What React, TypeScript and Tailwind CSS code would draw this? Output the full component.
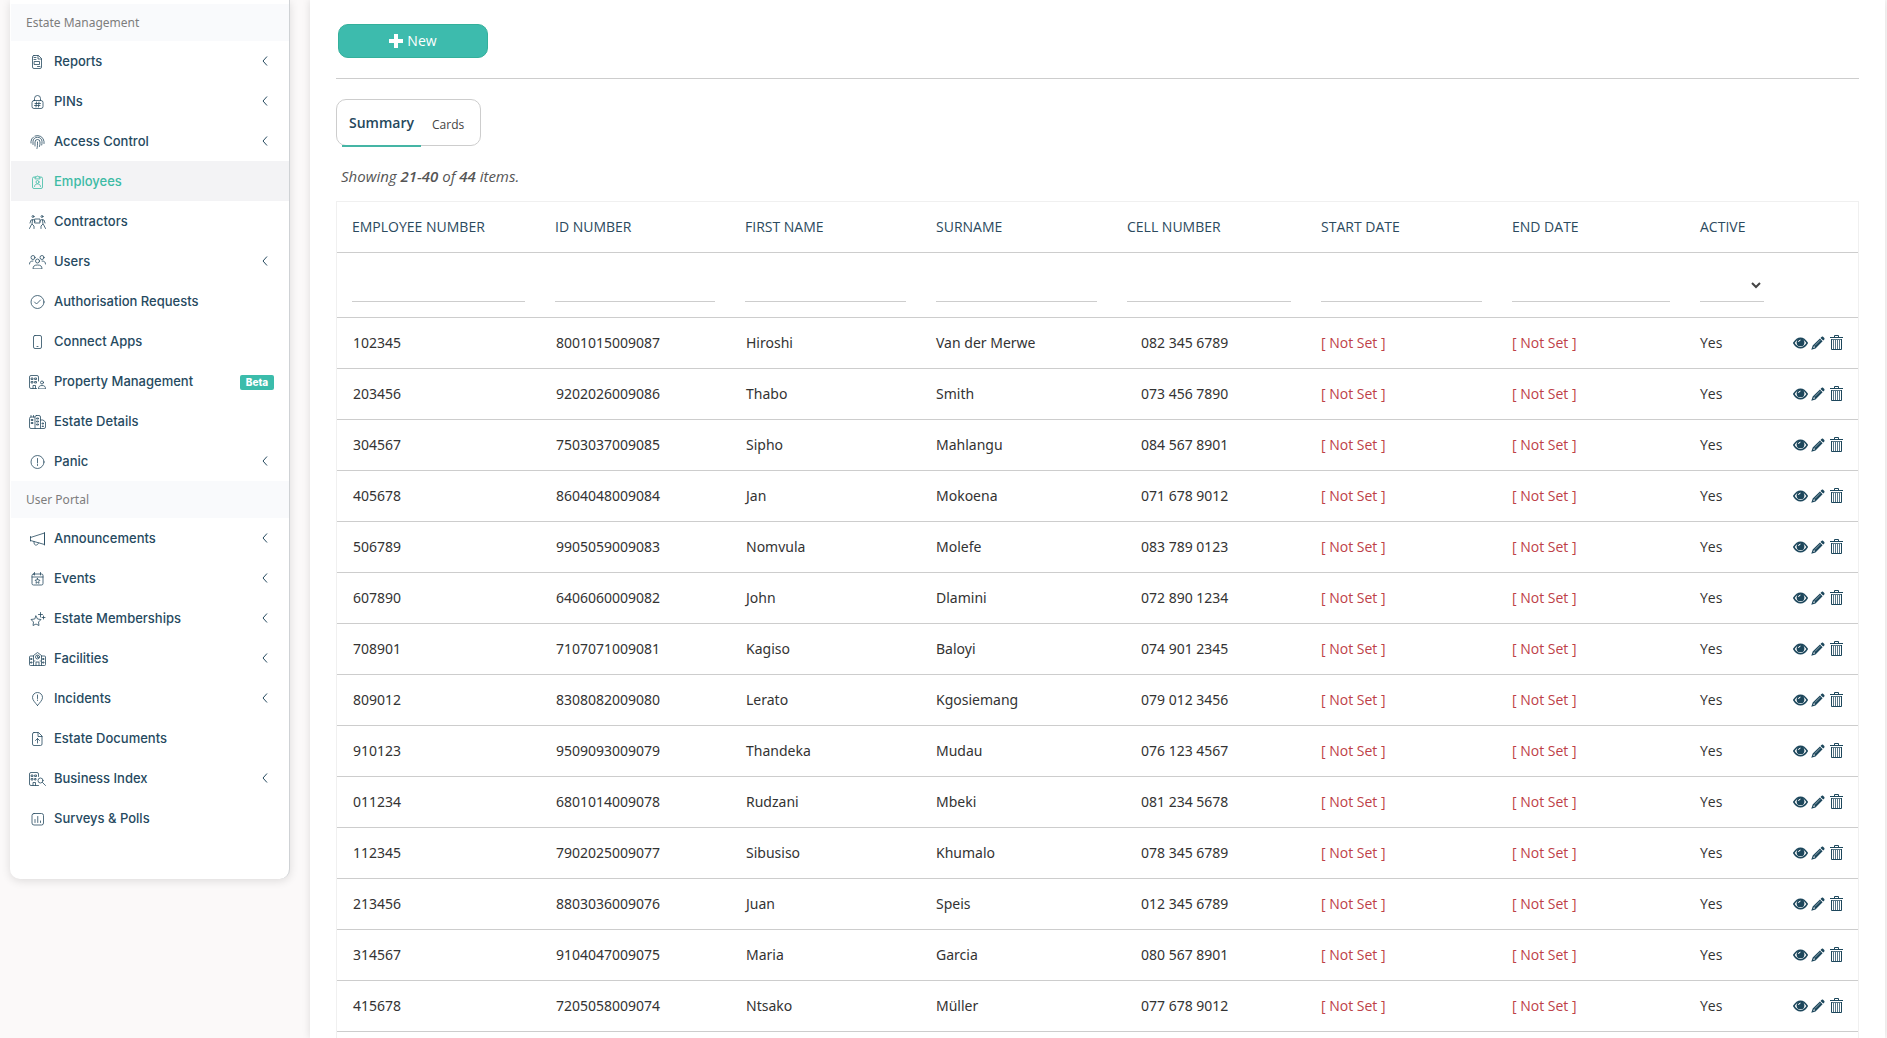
import type { ReactNode } from "react";

type IconName =
  | "reports"
  | "pins"
  | "access"
  | "employees"
  | "contractors"
  | "users"
  | "authorisation"
  | "apps"
  | "property"
  | "estate"
  | "panic"
  | "announcements"
  | "events"
  | "memberships"
  | "facilities"
  | "incidents"
  | "documents"
  | "business"
  | "surveys";

interface NavItem {
  label: string;
  icon: IconName;
  expandable?: boolean;
  active?: boolean;
  badge?: string;
}

const estateItems: NavItem[] = [
  { label: "Reports", icon: "reports", expandable: true },
  { label: "PINs", icon: "pins", expandable: true },
  { label: "Access Control", icon: "access", expandable: true },
  { label: "Employees", icon: "employees", active: true },
  { label: "Contractors", icon: "contractors" },
  { label: "Users", icon: "users", expandable: true },
  { label: "Authorisation Requests", icon: "authorisation" },
  { label: "Connect Apps", icon: "apps" },
  { label: "Property Management", icon: "property", badge: "Beta" },
  { label: "Estate Details", icon: "estate" },
  { label: "Panic", icon: "panic", expandable: true },
];

const portalItems: NavItem[] = [
  { label: "Announcements", icon: "announcements", expandable: true },
  { label: "Events", icon: "events", expandable: true },
  { label: "Estate Memberships", icon: "memberships", expandable: true },
  { label: "Facilities", icon: "facilities", expandable: true },
  { label: "Incidents", icon: "incidents", expandable: true },
  { label: "Estate Documents", icon: "documents" },
  { label: "Business Index", icon: "business", expandable: true },
  { label: "Surveys & Polls", icon: "surveys" },
];

const columns = [
  { label: "Employee Number", width: "w-[203px]" },
  { label: "ID Number", width: "w-[190px]" },
  { label: "First Name", width: "w-[191px]" },
  { label: "Surname", width: "w-[191px]" },
  { label: "Cell Number", width: "w-[194px]" },
  { label: "Start Date", width: "w-[191px]" },
  { label: "End Date", width: "w-[188px]" },
];

const employees = [
  { number: "102345", id: "8001015009087", first: "Hiroshi", surname: "Van der Merwe", cell: "082 345 6789" },
  { number: "203456", id: "9202026009086", first: "Thabo", surname: "Smith", cell: "073 456 7890" },
  { number: "304567", id: "7503037009085", first: "Sipho", surname: "Mahlangu", cell: "084 567 8901" },
  { number: "405678", id: "8604048009084", first: "Jan", surname: "Mokoena", cell: "071 678 9012" },
  { number: "506789", id: "9905059009083", first: "Nomvula", surname: "Molefe", cell: "083 789 0123" },
  { number: "607890", id: "6406060009082", first: "John", surname: "Dlamini", cell: "072 890 1234" },
  { number: "708901", id: "7107071009081", first: "Kagiso", surname: "Baloyi", cell: "074 901 2345" },
  { number: "809012", id: "8308082009080", first: "Lerato", surname: "Kgosiemang", cell: "079 012 3456" },
  { number: "910123", id: "9509093009079", first: "Thandeka", surname: "Mudau", cell: "076 123 4567" },
  { number: "011234", id: "6801014009078", first: "Rudzani", surname: "Mbeki", cell: "081 234 5678" },
  { number: "112345", id: "7902025009077", first: "Sibusiso", surname: "Khumalo", cell: "078 345 6789" },
  { number: "213456", id: "8803036009076", first: "Juan", surname: "Speis", cell: "012 345 6789" },
  { number: "314567", id: "9104047009075", first: "Maria", surname: "Garcia", cell: "080 567 8901" },
  { number: "415678", id: "7205058009074", first: "Ntsako", surname: "Müller", cell: "077 678 9012" },
];

// All drawn on a 34x28 grid and shown at half size
const iconPaths: Record<IconName, ReactNode> = {
  reports: (
    <>
      <path d="M10 1h9l6 6v17a3 3 0 0 1-3 3H10a3 3 0 0 1-3-3V4a3 3 0 0 1 3-3z" />
      <path d="M18 1v7h7M10 5h4M10 9h4M11 13h10v6H11zM17 23h5" />
    </>
  ),
  pins: (
    <>
      <rect x="6" y="11" width="22" height="16" rx="4" />
      <path d="M11 11V7a6 6 0 0 1 12 0v4M15 14l-1 10M20 14l-1 10M12 17h11M11 21h11" />
    </>
  ),
  access: (
    <>
      <path d="M4 16v-3a13 12 0 0 1 5-9M12 2a13 13 0 0 1 18 11v4M8 19v-6a9 8.500 0 0 1 18 0c0 3 0 5-.5 7M12 22v-8a5 5 0 0 1 10 0c0 4 0 6-1 9M17 14c0 6 0 9-1 13" />
    </>
  ),
  employees: (
    <>
      <path d="M13 4h-3a3 3 0 0 0-3 3v17a3 3 0 0 0 3 3h14a3 3 0 0 0 3-3V7a3 3 0 0 0-3-3h-3" />
      <path d="M12 7V4h3a2 2 0 0 1 4 0h3v3z" />
      <circle cx="17" cy="14" r="3" />
      <path d="M11 23c0-3 2-5 6-5s6 2 6 5" />
    </>
  ),
  contractors: (
    <>
      <circle cx="8" cy="3" r="2" />
      <circle cx="26" cy="3" r="2" />
      <rect x="12" y="8" width="10" height="8" />
      <path d="M12 13l-3-4-5 1-2 6M7 10l-1 8 4 4v5M5 19l-4 8M22 13l3-4 5 1 2 6M27 10l1 8-4 4v5M29 19l4 8" />
    </>
  ),
  users: (
    <>
      <circle cx="8" cy="5" r="4" />
      <circle cx="26" cy="5" r="4" />
      <circle cx="17" cy="12" r="4" />
      <path d="M1 18c0-4 2-6 7-6M33 18c0-4-2-6-7-6M8 27c0-5 3-7 9-7s9 2 9 7z" />
    </>
  ),
  authorisation: (
    <>
      <circle cx="17" cy="14" r="13" />
      <path d="M11 14l4 4 8-8" />
    </>
  ),
  apps: (
    <>
      <rect x="9" y="1" width="16" height="26" rx="3" />
      <path d="M16 23h2" />
    </>
  ),
  property: (
    <>
      <path d="M15 27H4a3 3 0 0 1-3-3V4a3 3 0 0 1 3-3h12a3 3 0 0 1 3 3v8M8 27v-6h5v6" />
      <path d="M5 6h3v3H5zM12 6h3v3h-3zM5 13h3v3H5zM12 13h3v3h-3z" />
      <circle cx="26" cy="15" r="3" />
      <path d="M19 27c0-4 2-6 7-6s7 2 7 6z" />
    </>
  ),
  estate: (
    <>
      <path d="M12 27H4a3 3 0 0 1-3-3V7a3 3 0 0 1 3-3h7M4 4V1M9 4V1M15 1h5a3 3 0 0 1 3 3v23H12V4a3 3 0 0 1 3-3zM23 10h5l5 4v10a3 3 0 0 1-3 3h-7" />
      <path d="M5 9h3v2H5zM5 15h3v2H5zM16 6h3v2h-3zM16 12h3v2h-3zM16 18h3v2h-3zM27 16h2v2h-2zM27 22h2v1h-2z" />
    </>
  ),
  panic: (
    <>
      <circle cx="17" cy="14" r="13" />
      <path d="M17 7v9M17 19v2" />
    </>
  ),
  announcements: (
    <>
      <path d="M3 9v9M3 11L31 2v23L3 17M31 1v25M10 19c-1 5 2 8 5 7s3-2 4-4" />
    </>
  ),
  events: (
    <>
      <rect x="6" y="4" width="22" height="22" rx="3" />
      <path d="M6 10h22M11 1v5M23 1v5M17 13l1.500 3 3.500.5-2.500 2.500.5 3.500-3-1.700-3 1.700.5-3.500-2.500-2.500 3.500-.5z" />
    </>
  ),
  memberships: (
    <>
      <path d="M14 8l3 6 7 1-5 5 1 7-6-3-6 3 1-7-5-5 7-1zM23 1v9M19 5h8M29 8v6M26 11h6" />
    </>
  ),
  facilities: (
    <>
      <path d="M9 8H3a2 2 0 0 0-2 2v15a2 2 0 0 0 2 2h28a2 2 0 0 0 2-2V10a2 2 0 0 0-2-2h-6M9 27V7l8-6 8 6v20M14 27v-7h6v7" />
      <circle cx="17" cy="10" r="4" />
      <path d="M4 13h2v2H4zM4 20h2v2H4zM28 13h2v2h-2zM28 20h2v2h-2zM17 8v3h2M11 18h1M22 18h1" />
    </>
  ),
  incidents: (
    <>
      <path d="M17 27c-5-6-10-11-10-16a10 10 0 0 1 20 0c0 5-5 10-10 16zM17 6v7M17 16v1" />
    </>
  ),
  documents: (
    <>
      <path d="M10 1h9l7 7v16a3 3 0 0 1-3 3H10a3 3 0 0 1-3-3V4a3 3 0 0 1 3-3z" />
      <path d="M18 1v8h8M17 22v-9M13 17l4-4 4 4" />
    </>
  ),
  business: (
    <>
      <path d="M19 27H4a3 3 0 0 1-3-3V4a3 3 0 0 1 3-3h12a3 3 0 0 1 3 3v5M8 27v-6h5v6" />
      <path d="M5 6h3v3H5zM12 6h3v3h-3zM5 13h3v3H5zM12 13h2v3h-2z" />
      <circle cx="23" cy="17" r="5" />
      <path d="M27 21l6 6" />
    </>
  ),
  surveys: (
    <>
      <rect x="6" y="3" width="23" height="23" rx="4" />
      <path d="M12 21v-6M17.500 21V9M23 21v-3" />
    </>
  ),
};

function MenuIcon({ name }: { name: IconName }) {
  return (
    <svg
      viewBox="0 0 34 28"
      className="h-[14px] w-[17px] shrink-0"
      fill="none"
      stroke="currentColor"
      strokeWidth="1.6"
      strokeLinecap="round"
      strokeLinejoin="round"
      aria-hidden="true"
    >
      {iconPaths[name]}
    </svg>
  );
}

function MenuHeading({ children }: { children: ReactNode }) {
  return (
    <h2 className="flex h-[37px] items-center bg-[#f9fafc] pt-px pl-[15px] font-['Noto_Sans',sans-serif] text-xs text-[#7d7d7d]">
      {children}
    </h2>
  );
}

function MenuList({ items }: { items: NavItem[] }) {
  return (
    <ul>
      {items.map((item) => (
        <li key={item.label}>
          <a
            href="#"
            className={`flex h-10 items-center pt-[2px] pl-[18px] pr-[15px] text-[13px] font-medium ${
              item.active ? "bg-[#f3f3f5] text-[#3dbba5]" : "text-[#264a5f]"
            }`}
          >
            <MenuIcon name={item.icon} />
            <span className="ml-2 flex-1">{item.label}</span>
            {item.expandable && (
              <svg viewBox="0 0 6 10" className="mr-[6px] mb-[2px] h-[10px] w-[6px]" fill="none" stroke="currentColor" aria-hidden="true">
                <path d="M5 0.500L1 5l4 4.500" />
              </svg>
            )}
            {item.badge && (
              <span className="flex h-[15px] w-[34px] items-center justify-center rounded-[2px] bg-[#3bbcab] text-[10px] font-extrabold text-white">
                {item.badge}
              </span>
            )}
          </a>
        </li>
      ))}
    </ul>
  );
}

function EyeIcon() {
  return (
    <svg viewBox="0 0 15 12" className="h-3 w-[15px]" aria-hidden="true">
      <path d="M.8 6c3.800-6.400 9.600-6.400 13.400 0-3.800 6.400-9.600 6.400-13.400 0z" fill="none" stroke="currentColor" strokeWidth="1.500" />
      <circle cx="7.500" cy="5.400" r="3.900" fill="currentColor" />
      <path d="M5.600 5a2 2 0 0 1 1.900-1.900" fill="none" stroke="#fff" strokeWidth="1" />
    </svg>
  );
}

function PencilIcon() {
  return (
    <svg viewBox="0 0 14 14" className="h-[14px] w-[14px]" fill="currentColor" aria-hidden="true">
      <path d="M10.400 1.100c.6-.7 1.300-.7 1.900-.1l.8.8c.6.6.6 1.300 0 1.900l-.9.9-2.700-2.700z" />
      <path d="M8.900 2.600l2.700 2.700-7.100 7.100L.3 13.800l1.400-4.200zM3 9.900l-.9 2.200 2.100-.9z" fillRule="evenodd" />
      <path d="M3.800 9.600l5.400-5.400" stroke="#fff" strokeWidth=".5" />
    </svg>
  );
}

function TrashIcon() {
  return (
    <svg viewBox="0 0 13 15" className="h-[15px] w-[13px]" fill="none" stroke="currentColor" aria-hidden="true">
      <path d="M4.500 2V.5h4V2M0 2.500h13M1.500 4v10.500h10V4" />
      <path d="M1 4.500h11M3.500 5v9M5.500 5v9M7.500 5v9M9.500 5v9" strokeOpacity=".75" />
    </svg>
  );
}

function Sidebar() {
  return (
    <aside className="w-[280px] shrink-0 rounded-b-[10px] border-r border-[#cfd2d5] bg-white pt-1 pb-[41px] font-['Inter',sans-serif] shadow-[0_2px_10px_rgba(0,0,0,0.12)]">
      <nav className="ml-px">
        <MenuHeading>Estate Management</MenuHeading>
        <MenuList items={estateItems} />
        <MenuHeading>User Portal</MenuHeading>
        <MenuList items={portalItems} />
      </nav>
    </aside>
  );
}

function EmployeeTable() {
  return (
    <table className="w-full table-fixed border-collapse text-left text-sm text-[#333]">
      <thead>
        <tr className="h-[50px] border-b border-[#cdcdcd] font-['Open_Sans',sans-serif] text-[#2c4a5e] uppercase">
          {columns.map((column) => (
            <th key={column.label} className={`px-[15px] font-normal ${column.width}`}>
              {column.label}
            </th>
          ))}
          <th className="w-[94px] px-[15px] font-normal">Active</th>
          <th className="w-[79px]" />
        </tr>
        <tr className="border-b border-[#cdcdcd]">
          {columns.map((column) => (
            <td key={column.label} className="p-[15px]">
              <input
                type="text"
                aria-label={column.label}
                className="block h-[34px] w-full border-b border-[#cdcdcd] bg-transparent outline-none"
              />
            </td>
          ))}
          <td className="p-[15px]">
            <select aria-label="Active" className="block h-[34px] w-full border-b border-[#cdcdcd] bg-transparent text-[#444] outline-none">
              <option value=""></option>
              <option value="1">Yes</option>
              <option value="0">No</option>
            </select>
          </td>
          <td />
        </tr>
      </thead>
      <tbody>
        {employees.map((employee) => (
          <tr key={employee.number} className="h-[51px] border-b border-[#cdcdcd]">
            <td className="px-4">{employee.number}</td>
            <td className="px-4">{employee.id}</td>
            <td className="px-4">{employee.first}</td>
            <td className="px-[15px]">{employee.surname}</td>
            <td className="pr-[15px] pl-[29px]">{employee.cell}</td>
            <td className="px-[15px] font-['Open_Sans',sans-serif] text-[#be3f48]">[ Not Set ]</td>
            <td className="px-[15px] font-['Open_Sans',sans-serif] text-[#be3f48]">[ Not Set ]</td>
            <td className="px-[15px] font-['Open_Sans',sans-serif]">Yes</td>
            <td className="pl-[14px] text-[#1d475c]">
              <div className="flex items-center gap-[3px]">
                <a href="#" aria-label={`View ${employee.first}`}>
                  <EyeIcon />
                </a>
                <a href="#" aria-label={`Edit ${employee.first}`}>
                  <PencilIcon />
                </a>
                <a href="#" aria-label={`Delete ${employee.first}`} className="ml-[2px]">
                  <TrashIcon />
                </a>
              </div>
            </td>
          </tr>
        ))}
      </tbody>
    </table>
  );
}

export default function App() {
  return (
    <div className="flex min-h-screen items-start bg-[#fbf9f9] pr-[2px] pl-[10px]">
      <Sidebar />
      <main className="ml-5 flex min-h-screen min-w-0 flex-1 flex-col bg-white px-[26px] pt-6 font-['Noto_Sans',sans-serif] shadow-[0_0_8px_rgba(0,0,0,0.12)]">
        <div className="border-b border-[#cdcdcd] pb-5 pl-[2px]">
          <button
            type="button"
            className="flex h-[34px] w-[150px] items-center justify-center gap-1 rounded-[10px] border border-[#34b09b] bg-[#3dbbad] font-['Open_Sans',sans-serif] text-sm font-medium text-white"
          >
            <svg viewBox="0 0 14 14" className="h-[14px] w-[14px]" fill="currentColor" aria-hidden="true">
              <path d="M5 0h4v5h5v4H9v5H5V9H0V5h5z" />
            </svg>
            New
          </button>
        </div>

        {/* View switch */}
        <div className="mt-5 flex h-[47px] w-[145px] rounded-[10px] border border-[#cdcdcd] pl-[5px] font-['Open_Sans',sans-serif]">
          <button type="button" className="-mb-[2px] w-[79px] border-b-2 border-[#45b5a5] text-sm font-semibold text-[#26485c]">
            Summary
          </button>
          <button type="button" className="ml-[11px] pt-1 text-xs text-[#444]">
            Cards
          </button>
        </div>

        <p className="mt-5 mb-[15px] pl-[5px] font-['Open_Sans',sans-serif] text-[15px] leading-5 text-[#555] italic">
          Showing <b className="font-semibold">21-40</b> of <b className="font-semibold">44</b> items.
        </p>

        <div className="flex-1 border-x border-t border-[#f0f0f0]">
          <EmployeeTable />
        </div>
      </main>
    </div>
  );
}
